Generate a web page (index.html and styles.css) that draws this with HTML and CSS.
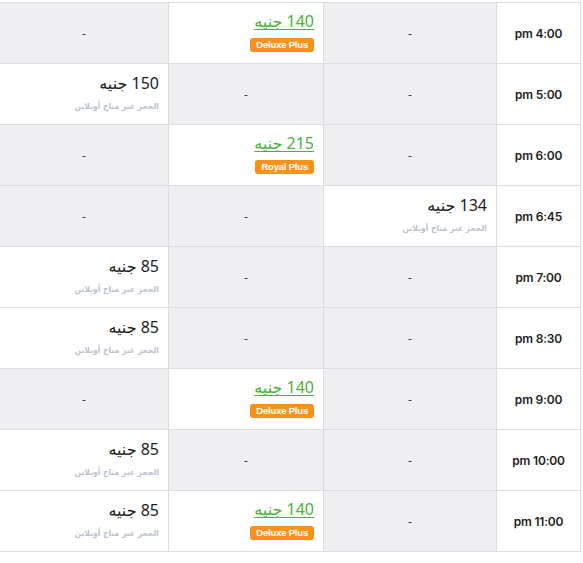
FILE: index.html
```html
<!DOCTYPE html>
<html lang="ar">
<head>
<meta charset="utf-8">
<link rel="stylesheet" href="styles.css">
</head>
<body>
<div class="schedule">
  <div class="cell time">4:00 pm</div>
  <div class="cell empty">-</div>
  <div class="cell offer"><a class="price link" href="#">140 جنيه</a><span class="badge">Deluxe Plus</span></div>
  <div class="cell empty">-</div>

  <div class="cell time">5:00 pm</div>
  <div class="cell empty">-</div>
  <div class="cell empty">-</div>
  <div class="cell offer"><span class="price">150 جنيه</span><span class="note">الحجز غير متاح أونلاين</span></div>

  <div class="cell time">6:00 pm</div>
  <div class="cell empty">-</div>
  <div class="cell offer"><a class="price link" href="#">215 جنيه</a><span class="badge">Royal Plus</span></div>
  <div class="cell empty">-</div>

  <div class="cell time">6:45 pm</div>
  <div class="cell offer"><span class="price">134 جنيه</span><span class="note">الحجز غير متاح أونلاين</span></div>
  <div class="cell empty">-</div>
  <div class="cell empty">-</div>

  <div class="cell time">7:00 pm</div>
  <div class="cell empty">-</div>
  <div class="cell empty">-</div>
  <div class="cell offer"><span class="price">85 جنيه</span><span class="note">الحجز غير متاح أونلاين</span></div>

  <div class="cell time">8:30 pm</div>
  <div class="cell empty">-</div>
  <div class="cell empty">-</div>
  <div class="cell offer"><span class="price">85 جنيه</span><span class="note">الحجز غير متاح أونلاين</span></div>

  <div class="cell time">9:00 pm</div>
  <div class="cell empty">-</div>
  <div class="cell offer"><a class="price link" href="#">140 جنيه</a><span class="badge">Deluxe Plus</span></div>
  <div class="cell empty">-</div>

  <div class="cell time">10:00 pm</div>
  <div class="cell empty">-</div>
  <div class="cell empty">-</div>
  <div class="cell offer"><span class="price">85 جنيه</span><span class="note">الحجز غير متاح أونلاين</span></div>

  <div class="cell time">11:00 pm</div>
  <div class="cell empty">-</div>
  <div class="cell offer"><a class="price link" href="#">140 جنيه</a><span class="badge">Deluxe Plus</span></div>
  <div class="cell offer"><span class="price">85 جنيه</span><span class="note">الحجز غير متاح أونلاين</span></div>
</div>
</body>
</html>
```

FILE: styles.css
```css
html, body {
  margin: 0;
  padding: 0;
  background: #ffffff;
}

body {
  font-family: "Open Sans", "DejaVu Sans", sans-serif;
  color: #222222;
  padding-top: 2px;
}

.schedule {
  direction: rtl;
  box-sizing: border-box;
  width: 581px;
  margin-right: auto;
  display: grid;
  grid-template-columns: 84px 173px 155px 1fr;
  grid-auto-rows: 61px;
  border-top: 1px solid #dcdde1;
  border-right: 1px solid #dcdde1;
}

.cell {
  box-sizing: border-box;
  border-left: 1px solid #dcdde1;
  border-bottom: 1px solid #dcdde1;
  background: #ffffff;
}

.cell:nth-child(4n) {
  border-left: none;
}

.time {
  display: flex;
  align-items: center;
  justify-content: center;
  font-family: "Inter", "Open Sans", sans-serif;
  font-weight: 600;
  font-size: 12px;
  color: #1e1e1e;
  letter-spacing: -0.2px;
}

.empty {
  display: flex;
  align-items: center;
  justify-content: center;
  background: #efeff1;
  font-size: 12px;
  color: #333333;
}

.offer {
  display: flex;
  flex-direction: column;
  align-items: flex-start;
  justify-content: center;
  padding-right: 9px;
}

.price {
  font-family: "Noto Sans", "DejaVu Sans", sans-serif;
  font-size: 16px;
  line-height: 20px;
  color: #1c1c1c;
  margin-top: -3px;
}

.price.link {
  color: #4fae45;
  text-decoration: underline;
  text-underline-offset: 2px;
}

.note {
  margin-top: 7px;
  font-family: "DejaVu Sans Condensed", "DejaVu Sans", sans-serif;
  font-stretch: condensed;
  font-size: 8.5px;
  font-weight: bold;
  color: #bcc2cc;
  line-height: 12px;
}

.badge {
  margin-top: 7px;
  background: #f7931d;
  color: #ffffff;
  font-family: "Liberation Sans", Arial, sans-serif;
  font-weight: bold;
  font-size: 9.5px;
  line-height: 14px;
  padding: 0 6px;
  border-radius: 3px;
  letter-spacing: -0.2px;
}
```
